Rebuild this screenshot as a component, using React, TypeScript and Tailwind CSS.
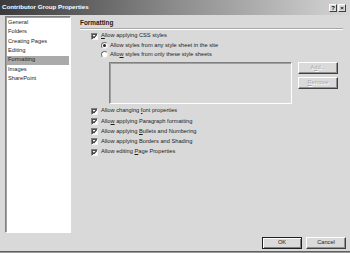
const font = { fontFamily: '"Liberation Sans", Arial, sans-serif' };

const pages = ["General", "Folders", "Creating Pages", "Editing", "Formatting", "Images", "SharePoint"];

const CheckBox = () => (
    <span className="w-[7px] h-[7px] shrink-0 bg-white border border-t-[#808080] border-l-[#808080] border-r-[#f4f4f4] border-b-[#f4f4f4] shadow-[inset_1px_1px_#505050] flex items-center justify-center">
        <svg width="5" height="5" viewBox="0 0 5 5">
            <path d="M0.6 2.3 L2 3.6 L4.5 0.9" fill="none" stroke="#2a2a2a" strokeWidth="1.1" />
        </svg>
    </span>
);

const Radio = ({ on }: { on?: boolean }) => (
    <span className="w-[7px] h-[7px] shrink-0 rounded-full bg-white border border-t-[#707070] border-l-[#707070] border-r-[#e8e8e8] border-b-[#e8e8e8] flex items-center justify-center">
        {on && <span className="w-[3px] h-[3px] rounded-full bg-[#222]" />}
    </span>
);

const Option = ({ children }: { children: React.ReactNode }) => (
    <div className="h-[10.2px] flex items-center gap-[3px] ml-[11px]">
        <CheckBox />
        <span className="text-[5.7px] leading-none text-[#1c1c1c] whitespace-nowrap">{children}</span>
    </div>
);

const Btn = ({ children, disabled, main }: { children: React.ReactNode; disabled?: boolean; main?: boolean }) => (
    <div
        className={
            "w-[40px] h-[12px] flex items-center justify-center text-[5.7px] leading-none bg-[#dadada] border " +
            (main
                ? "border-[#202020] shadow-[inset_1px_1px_#fff,inset_-1px_-1px_#808080] "
                : "border-t-white border-l-white border-r-[#404040] border-b-[#404040] shadow-[inset_-1px_-1px_#909090] ") +
            (disabled ? "text-[#a8a8a8] [text-shadow:1px_1px_0_#fff]" : "text-[#1c1c1c]")
        }
    >
        {children}
    </div>
);

export default function App() {
    return (
        <div className="w-[350px] h-[253px] bg-[#d9d9d9] flex flex-col overflow-hidden" style={font}>
            <div className="h-[15px] shrink-0 flex items-center pl-[2px] pr-[4px] bg-gradient-to-r from-[#3a3a3a] via-[#8c8c8c] to-[#d6d6d6]">
                <span className="text-[6.2px] font-bold text-white leading-none">Contributor Group Properties</span>
                <div className="ml-auto flex gap-[1px]">
                    <span className="w-[8px] h-[8px] bg-[#dadada] border border-t-white border-l-white border-r-[#404040] border-b-[#404040] flex items-center justify-center text-[6px] font-bold leading-none text-black">?</span>
                    <span className="w-[8px] h-[8px] bg-[#dadada] border border-t-white border-l-white border-r-[#404040] border-b-[#404040] flex items-center justify-center text-[6px] font-bold leading-none text-black">×</span>
                </div>
            </div>
            <div className="h-[218px] shrink-0 flex">
                <div className="ml-[5px] mt-[1px] w-[66px] h-[217px] bg-white border border-t-[#808080] border-l-[#808080] border-r-white border-b-white shadow-[inset_1px_1px_#a0a0a0] pt-[1px] px-[1px]">
                    {pages.map((p) => (
                        <div
                            key={p}
                            className={"h-[9.4px] flex items-center pl-[1px] text-[5.7px] leading-none text-[#1c1c1c] " + (p === "Formatting" ? "bg-[#aaaaaa]" : "")}
                        >
                            {p}
                        </div>
                    ))}
                </div>
                <div className="flex-1 ml-[9px] mr-[7px] flex flex-col">
                    <div className="mt-[4px] h-[8px] flex items-center text-[6.4px] font-bold leading-none text-[#1c1c1c]">Formatting</div>
                    <div className="mt-[1px] h-[2px] border-t border-t-[#a8a8a8] border-b border-b-white" />
                    <div className="mt-[1px]">
                        <Option>
                            <u>A</u>llow applying CSS styles
                        </Option>
                    </div>
                    <div className="ml-[21px] flex flex-col">
                        <div className="h-[9px] flex items-center gap-[2px]">
                            <Radio on />
                            <span className="text-[5.7px] leading-none text-[#1c1c1c] whitespace-nowrap">Allow styles from any style sheet in the site</span>
                        </div>
                        <div className="h-[9px] flex items-center gap-[2px]">
                            <Radio />
                            <span className="text-[5.7px] leading-none text-[#1c1c1c] whitespace-nowrap">
                                Allo<u>w</u> styles from only these style sheets
                            </span>
                        </div>
                    </div>
                    <div className="ml-[29px] mt-[3px] flex gap-[6px]">
                        <div className="w-[183px] h-[42px] bg-[#d9d9d9] border border-t-[#808080] border-l-[#808080] border-r-white border-b-white shadow-[inset_1px_1px_#a0a0a0]" />
                        <div className="flex flex-col gap-[3px]">
                            <Btn disabled>
                                A<u>d</u>d...
                            </Btn>
                            <Btn disabled>
                                <u>R</u>emove
                            </Btn>
                        </div>
                    </div>
                    <div className="mt-[2px] flex flex-col">
                        <Option>
                            Allow changing <u>f</u>ont properties
                        </Option>
                        <Option>
                            Allo<u>w</u> applying Paragraph formatting
                        </Option>
                        <Option>
                            Allow applying <u>B</u>ullets and Numbering
                        </Option>
                        <Option>Allow applying Borders and Shading</Option>
                        <Option>
                            Allow editing <u>P</u>age Properties
                        </Option>
                    </div>
                </div>
            </div>
            <div className="h-[18px] shrink-0 flex justify-end items-start pt-[4px] pr-[4px] gap-[4px]">
                <Btn main>OK</Btn>
                <Btn>Cancel</Btn>
            </div>
            <div className="h-[2px] shrink-0 border-t border-t-[#606060] border-b border-b-[#9a9a9a]" />
        </div>
    );
}
